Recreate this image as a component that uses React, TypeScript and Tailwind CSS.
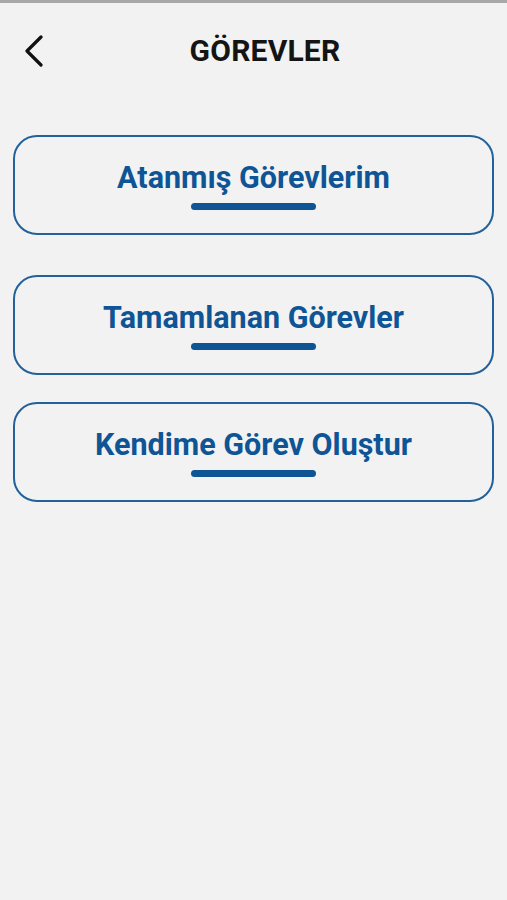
const tasks = [
  { label: "Atanmış Görevlerim", gap: "mt-[36px]" },
  { label: "Tamamlanan Görevler", gap: "mt-[40px]" },
  { label: "Kendime Görev Oluştur", gap: "mt-[27px]" },
];

const BackIcon = () => (
  <svg width="20" height="32" viewBox="0 0 20 32" fill="none">
    <path d="M17 2 L3 16 L17 30" stroke="#111" strokeWidth="3.2" strokeLinecap="round" strokeLinejoin="round" />
  </svg>
);

export default function App() {
  return (
    <div className="min-h-[900px] w-full bg-[#f2f2f2] font-['Roboto',sans-serif]">
      <div className="h-[3px] bg-[#a8a8a8]" />

      <header className="flex h-[96px] items-center pl-[24px] pr-[23px]">
        <button type="button" className="flex w-[22px] items-center">
          <BackIcon />
        </button>
        <h1 className="flex-1 text-center text-[30px] font-bold leading-none tracking-[0.2px] text-[#141414]">
          GÖREVLER
        </h1>
      </header>

      <div className="flex flex-col">
        {tasks.map((t) => (
          <button
            key={t.label}
            type="button"
            className={`${t.gap} mx-[13px] flex h-[100px] flex-col items-center rounded-[24px] border-2 border-[#22619a] pt-[26px]`}
          >
            <span className="text-[30.5px] font-bold leading-none text-[#0f5595]">{t.label}</span>
            <span className="mt-[9px] h-[7px] w-[125px] rounded-full bg-[#0f5595]" />
          </button>
        ))}
      </div>
    </div>
  );
}
